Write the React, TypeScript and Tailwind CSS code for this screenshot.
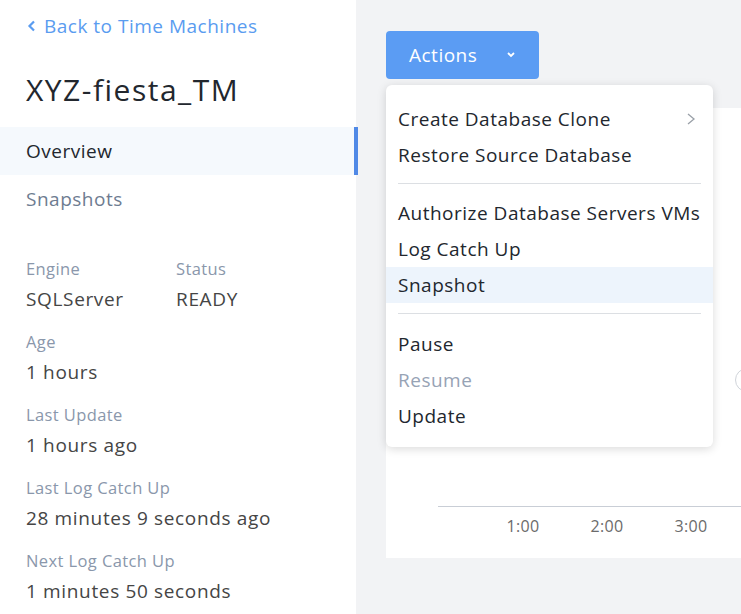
import React from "react";

const font = { fontFamily: "'Open Sans', Lato, sans-serif" };

function Field({ label, value }: { label: string; value: string }) {
  return (
    <div className="flex flex-col">
      <div className="h-[20px] leading-[20px] text-[16.5px] tracking-[0.4px] text-[#8a97ab]">{label}</div>
      <div className="mt-[9px] h-[22px] leading-[22px] text-[19px] tracking-[0.65px] text-[#454545]">{value}</div>
    </div>
  );
}

function Item({ children, active, disabled, sub }: { children: React.ReactNode; active?: boolean; disabled?: boolean; sub?: boolean }) {
  return (
    <div
      className={`flex h-[36px] items-center justify-between px-3 text-[19px] tracking-[0.5px] ${active ? "bg-[#edf4fc]" : ""} ${disabled ? "text-[#97a3b5]" : "text-[#22272e]"}`}
    >
      <span>{children}</span>
      {sub && (
        <svg width="10" height="14" viewBox="0 0 10 14" className="mr-[5px]">
          <path d="M2 2 L8 7 L2 12" fill="none" stroke="#9aa0a8" strokeWidth="1.3" />
        </svg>
      )}
    </div>
  );
}

function Divider({ mb }: { mb: string }) {
  return <div className={`mx-3 mt-[10px] h-px bg-[#dcdfe3] ${mb}`} />;
}

export default function App() {
  return (
    <div style={font} className="relative flex h-[614px] w-[741px] overflow-hidden bg-[#f2f3f5]">
      <aside className="flex w-[356px] shrink-0 flex-col bg-white">
        <div className="flex h-[52px] items-center pl-[27px] text-[19px] tracking-[0.5px] text-[#5a9cf0]">
          <svg width="10" height="12" viewBox="0 0 10 12" className="mr-[7px]">
            <path d="M7 1.5 L2.5 6 L7 10.5" fill="none" stroke="#5a9cf0" strokeWidth="2.2" />
          </svg>
          Back to Time Machines
        </div>
        <div className="flex h-[75px] items-center pl-[26px] text-[30px] tracking-[1.5px] text-[#22272e]">XYZ-fiesta_TM</div>
        <div className="relative flex h-[48px] items-center bg-[#f5f9fd] pl-[26px] text-[19px] tracking-[0.5px] text-[#22272e]">
          Overview
          <div className="absolute right-[-2px] top-0 h-full w-[4px] bg-[#5089e6]" />
        </div>
        <div className="flex h-[48px] items-center pl-[26px] text-[19px] tracking-[0.5px] text-[#6e7c91]">Snapshots</div>
        <div className="flex flex-col gap-[22px] pl-[26px] pt-[36px]">
          <div className="flex">
            <div className="w-[150px]">
              <Field label="Engine" value="SQLServer" />
            </div>
            <Field label="Status" value="READY" />
          </div>
          <Field label="Age" value="1 hours" />
          <Field label="Last Update" value="1 hours ago" />
          <Field label="Last Log Catch Up" value="28 minutes 9 seconds ago" />
          <Field label="Next Log Catch Up" value="1 minutes 50 seconds" />
        </div>
      </aside>
      <main className="relative flex flex-1 flex-col pl-[30px] pt-[31px]">
        <button className="flex h-[48px] w-[153px] items-center rounded-[4px] bg-[#5b9cf3] pl-[23px] text-[19px] tracking-[0.5px] text-white">
          <span>Actions</span>
          <svg width="10" height="8" viewBox="0 0 10 8" className="ml-[29px]">
            <path d="M2 2 L5 5 L8 2" fill="none" stroke="white" strokeWidth="1.8" />
          </svg>
        </button>
        <div className="relative mt-[29px] h-[450px] w-[400px] bg-white">
          <div className="absolute left-[52px] right-0 top-[398px] h-px bg-[#c9ced6]" />
          <div className="absolute left-[119px] top-[406px] flex gap-[48px] text-[16px] tracking-[0.3px] text-[#6b6b6b]">
            <span className="w-[36px] text-center">1:00</span>
            <span className="w-[36px] text-center">2:00</span>
            <span className="w-[36px] text-center">3:00</span>
          </div>
          <div className="absolute left-[349px] top-[260px] h-[24px] w-[24px] rounded-full border border-[#d0d4da]" />
        </div>
        <div className="absolute left-[30px] top-[85px] w-[327px] rounded-[6px] bg-white pb-[13px] pt-[16px] shadow-[0_2px_10px_rgba(0,0,0,0.15)]">
          <Item sub>Create Database Clone</Item>
          <Item>Restore Source Database</Item>
          <Divider mb="mb-[11px]" />
          <Item>Authorize Database Servers VMs</Item>
          <Item>Log Catch Up</Item>
          <Item active>Snapshot</Item>
          <Divider mb="mb-[12px]" />
          <Item>Pause</Item>
          <Item disabled>Resume</Item>
          <Item>Update</Item>
        </div>
      </main>
    </div>
  );
}
